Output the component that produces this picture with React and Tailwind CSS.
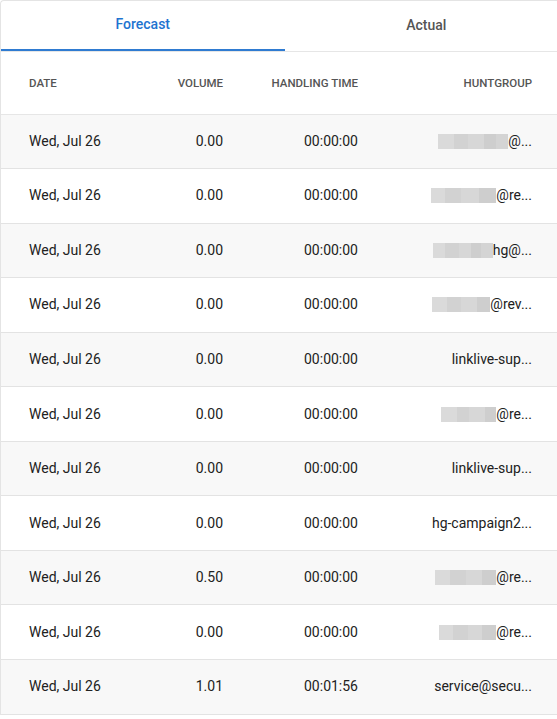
import React from "react";

const rows = [
  { v: "0.00", t: "00:00:00", blur: [16, 14, 16, 12, 12], s: "@..." },
  { v: "0.00", t: "00:00:00", blur: [14, 16, 18, 17], s: "@re..." },
  { v: "0.00", t: "00:00:00", blur: [12, 14, 12, 10, 12], s: "hg@..." },
  { v: "0.00", t: "00:00:00", blur: [15, 14, 16, 13], s: "@rev..." },
  { v: "0.00", t: "00:00:00", text: "linklive-sup..." },
  { v: "0.00", t: "00:00:00", blur: [16, 12, 16, 11], s: "@re..." },
  { v: "0.00", t: "00:00:00", text: "linklive-sup..." },
  { v: "0.00", t: "00:00:00", text: "hg-campaign2..." },
  { v: "0.50", t: "00:00:00", blur: [15, 16, 16, 14], s: "@re..." },
  { v: "0.00", t: "00:00:00", blur: [14, 15, 14, 14], s: "@re..." },
  { v: "1.01", t: "00:01:56", text: "service@secu..." },
];

const shades = ["#dadada", "#d2d2d2", "#d7d7d7", "#cecece", "#d4d4d4"];

function Blur({ widths }) {
  return (
    <span className="inline-flex h-[15px]">
      {widths.map((w, i) => (
        <span
          key={i}
          className="h-full"
          style={{ width: w, background: shades[i % shades.length] }}
        />
      ))}
    </span>
  );
}

export default function App() {
  return (
    <div
      className="w-[557px] h-[719px] overflow-hidden bg-white text-[#212121]"
      style={{ fontFamily: "Roboto, 'Liberation Sans', sans-serif" }}
    >
      <div className="w-[568px] border-l border-t border-[#e4e4e4] rounded-tl-[4px] bg-white">
        <div className="flex border-b border-[#e6e6e6]">
          <div className="w-[284px] h-[50px] pb-[2px] flex items-center justify-center text-[14px] font-medium text-[#1e74d0] border-b-2 border-[#2f7bd1] -mb-px">
            Forecast
          </div>
          <div className="w-[284px] h-[50px] pb-[2px] flex items-center justify-center text-[14px] font-medium text-[#555]">
            Actual
          </div>
        </div>
        <div className="flex items-center h-[62.5px] pt-[2px] pl-[28px] border-b border-[#e6e6e6] text-[11.5px] font-medium text-[#555]">
          <div className="w-[110px]">DATE</div>
          <div className="w-[84px] text-right">VOLUME</div>
          <div className="w-[135px] text-right">HANDLING TIME</div>
          <div className="w-[174px] text-right">HUNTGROUP</div>
        </div>
        {rows.map((r, i) => (
          <div
            key={i}
            className={`flex items-center h-[54.55px] pl-[28px] border-b border-[#e3e3e3] text-[14px] ${
              i % 2 === 0 ? "bg-[#f8f8f8]" : "bg-white"
            }`}
          >
            <div className="w-[110px]">Wed, Jul 26</div>
            <div className="w-[84px] text-right">{r.v}</div>
            <div className="w-[135px] text-right">{r.t}</div>
            <div className="w-[174px] flex justify-end items-center">
              {r.text ? (
                <span>{r.text}</span>
              ) : (
                <>
                  <Blur widths={r.blur} />
                  <span>{r.s}</span>
                </>
              )}
            </div>
          </div>
        ))}
      </div>
    </div>
  );
}
